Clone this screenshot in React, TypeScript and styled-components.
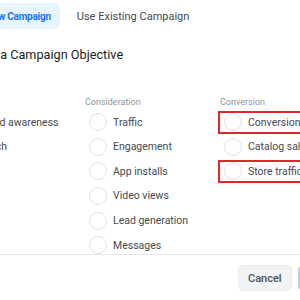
import React from 'react'
import styled, { createGlobalStyle } from 'styled-components'

const GlobalStyle = createGlobalStyle`
  html, body {
    margin: 0;
    padding: 0;
    background: #ffffff;
    overflow: hidden;
  }
  body {
    font-family: Roboto, 'Liberation Sans', Arial, sans-serif;
    color: #1c1e21;
  }
`

interface Objective {
  label: string
  marked?: boolean
}

interface Group {
  title: string
  items: Objective[]
}

const groups: Group[] = [
  {
    title: 'Awareness',
    items: [{ label: 'Brand awareness' }, { label: 'Reach' }],
  },
  {
    title: 'Consideration',
    items: [
      { label: 'Traffic' },
      { label: 'Engagement' },
      { label: 'App installs' },
      { label: 'Video views' },
      { label: 'Lead generation' },
      { label: 'Messages' },
    ],
  },
  {
    title: 'Conversion',
    items: [
      { label: 'Conversions', marked: true },
      { label: 'Catalog sales' },
      { label: 'Store traffic', marked: true },
    ],
  },
]

const App: React.FC = () => {
  return (
    <>
      <GlobalStyle />
      <StyledModal>
        <StyledBody>
          <StyledTabs>
            <StyledTab active>New Campaign</StyledTab>
            <StyledTab>Use Existing Campaign</StyledTab>
          </StyledTabs>
          <StyledTitle>Choose a Campaign Objective</StyledTitle>
          <StyledColumns>
            {groups.map((group) => (
              <StyledColumn key={group.title}>
                <StyledColumnTitle>{group.title}</StyledColumnTitle>
                {group.items.map((item) => (
                  <StyledRow key={item.label} marked={item.marked}>
                    <StyledRadio />
                    <StyledLabel>{item.label}</StyledLabel>
                  </StyledRow>
                ))}
              </StyledColumn>
            ))}
          </StyledColumns>
        </StyledBody>
        <StyledFooter>
          <StyledButton>Cancel</StyledButton>
          <StyledButton primary>Continue</StyledButton>
        </StyledFooter>
      </StyledModal>
    </>
  )
}

const StyledModal = styled.div`
  width: 300px;
  height: 300px;
  display: flex;
  flex-direction: column;
`

const StyledBody = styled.div`
  display: flex;
  flex-direction: column;
  margin-left: -51px;
  padding-top: 3px;
  height: 254px;
  box-sizing: border-box;
`

const StyledTabs = styled.div`
  display: flex;
  gap: 8px;
  margin-left: 28px;
`

const StyledTab = styled.div<{ active?: boolean }>`
  height: 26px;
  display: flex;
  align-items: center;
  padding: 0 9px;
  border-radius: 6px;
  white-space: nowrap;
  font-size: ${(props) => (props.active ? '10px' : '11px')};
  font-weight: ${(props) => (props.active ? 700 : 400)};
  letter-spacing: ${(props) => (props.active ? '-0.25px' : '0')};
  color: ${(props) => (props.active ? '#1877f2' : '#444950')};
  background-color: ${(props) => (props.active ? '#e7f3ff' : 'transparent')};
`

const StyledTitle = styled.div`
  margin-top: 17px;
  margin-left: 5px;
  font-size: 12.7px;
  line-height: 18px;
  color: #1c1e21;
  white-space: nowrap;
`

const StyledColumns = styled.div`
  display: grid;
  grid-template-columns: repeat(3, 135px);
  margin-top: 32px;
`

const StyledColumn = styled.div`
  display: flex;
  flex-direction: column;
  gap: 6.65px;
`

const StyledColumnTitle = styled.div`
  font-size: 9px;
  line-height: 12px;
  color: #90949c;
  margin-bottom: -1.65px;
  padding-left: 1px;
`

const StyledRow = styled.div<{ marked?: boolean }>`
  position: relative;
  display: flex;
  align-items: center;
  gap: 6px;
  height: 18px;
  padding-left: 5px;

  &::after {
    content: '';
    display: ${(props) => (props.marked ? 'block' : 'none')};
    position: absolute;
    left: -1px;
    top: -2px;
    bottom: -3px;
    width: 120px;
    border: 2px solid #e0262b;
    box-sizing: border-box;
  }
`

const StyledRadio = styled.span`
  width: 18px;
  height: 18px;
  box-sizing: border-box;
  border-radius: 50%;
  border: 1px solid #dfe1e5;
  flex-shrink: 0;
`

const StyledLabel = styled.span`
  font-size: 10.5px;
  color: #444950;
  white-space: nowrap;
`

const StyledFooter = styled.div`
  display: flex;
  gap: 6px;
  border-top: 1px solid #e4e6eb;
  padding: 10px 0 0 238px;
`

const StyledButton = styled.div<{ primary?: boolean }>`
  height: 26px;
  display: flex;
  align-items: center;
  flex-shrink: 0;
  padding: 0 9px;
  border-radius: 5px;
  font-size: 11px;
  font-weight: 500;
  box-sizing: border-box;
  color: ${(props) => (props.primary ? '#ffffff' : '#4b4f56')};
  background-color: ${(props) => (props.primary ? '#b3cff7' : '#f2f3f5')};
  border: 1px solid ${(props) => (props.primary ? '#b3cff7' : '#e9eaed')};
`

export default App
